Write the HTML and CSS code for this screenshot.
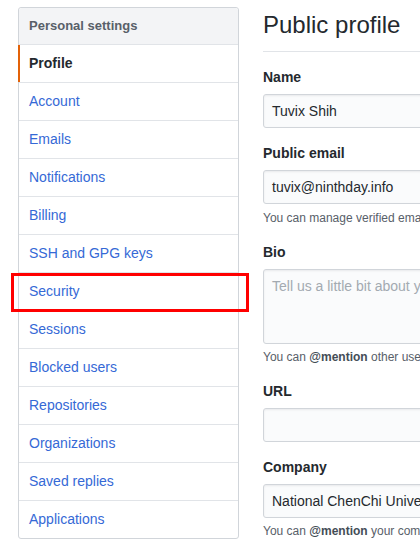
FILE: index.html
```html
<!DOCTYPE html>
<html>
<head>
<meta charset="utf-8">
<link rel="stylesheet" href="styles.css">
</head>
<body>
<div class="page">
  <nav class="menu">
    <div class="menu-heading">Personal settings</div>
    <a class="menu-item selected">Profile</a>
    <a class="menu-item">Account</a>
    <a class="menu-item">Emails</a>
    <a class="menu-item">Notifications</a>
    <a class="menu-item">Billing</a>
    <a class="menu-item">SSH and GPG keys</a>
    <a class="menu-item">Security</a>
    <a class="menu-item">Sessions</a>
    <a class="menu-item">Blocked users</a>
    <a class="menu-item">Repositories</a>
    <a class="menu-item">Organizations</a>
    <a class="menu-item">Saved replies</a>
    <a class="menu-item">Applications</a>
  </nav>
  <main class="main">
    <h2 class="subhead">Public profile</h2>
    <div class="group">
      <label class="label">Name</label>
      <div class="input">Tuvix Shih</div>
    </div>
    <div class="group">
      <label class="label">Public email</label>
      <div class="input">tuvix@ninthday.info</div>
      <p class="note note-spaced">You can manage verified email addresses in your email settings.</p>
    </div>
    <div class="group">
      <label class="label">Bio</label>
      <div class="input textarea placeholder">Tell us a little bit about yourself</div>
      <p class="note">You can <b>@mention</b> other users and organizations to link to them.</p>
    </div>
    <div class="group">
      <label class="label">URL</label>
      <div class="input"></div>
    </div>
    <div class="group">
      <label class="label">Company</label>
      <div class="input">National ChenChi University</div>
      <p class="note">You can <b>@mention</b> your company's GitHub organization to link it.</p>
    </div>
  </main>
</div>
<div class="highlight"></div>
</body>
</html>
```

FILE: styles.css
```css
html, body {
  margin: 0;
  padding: 0;
  overflow: hidden;
  background: #fff;
}
body {
  font-family: "Liberation Sans", Arial, sans-serif;
  font-size: 14px;
  color: #24292e;
  width: 420px;
  height: 548px;
  position: relative;
}
.page {
  display: flex;
  align-items: flex-start;
  gap: 24px;
  padding: 7px 0 0 18px;
  width: 700px;
}
.menu {
  width: 221px;
  flex: none;
  box-sizing: border-box;
  border: 1px solid #d1d5da;
  border-radius: 3px;
  display: flex;
  flex-direction: column;
}
.menu-heading {
  background: #f3f4f6;
  color: #586069;
  font-weight: bold;
  font-size: 13px;
  line-height: 20px;
  padding: 8px 10px;
  border-bottom: 1px solid #e1e4e8;
  border-radius: 3px 3px 0 0;
}
.menu-item {
  display: block;
  color: #3569d6;
  line-height: 21px;
  padding: 8px 10px;
  border-bottom: 1px solid #e1e4e8;
  position: relative;
}
.menu-item:last-child {
  border-bottom: none;
}
.menu-item.selected {
  color: #24292e;
  font-weight: bold;
}
.menu-item.selected::before {
  content: "";
  position: absolute;
  left: -1px;
  top: 0;
  bottom: 0;
  width: 2px;
  background: #e36209;
}
.main {
  width: 440px;
  flex: none;
}
.subhead {
  margin: 5px 0 15px;
  font-size: 24px;
  font-weight: normal;
  line-height: 26px;
  padding-bottom: 13px;
  border-bottom: 1px solid #e1e4e8;
}
.group {
  margin-bottom: 15px;
}
.label {
  display: block;
  font-weight: bold;
  line-height: 20px;
  margin-bottom: 7px;
}
.input {
  box-sizing: border-box;
  height: 34px;
  padding: 6px 8px;
  line-height: 20px;
  font-size: 14px;
  background: #fafbfc;
  border: 1px solid #d1d5da;
  border-radius: 3px;
  box-shadow: inset 0 1px 2px rgba(27, 31, 35, 0.075);
  color: #24292e;
  white-space: nowrap;
  overflow: hidden;
}
.textarea {
  height: 75px;
}
.placeholder {
  color: #a3aab1;
}
.note {
  margin: 4px 0 1px;
  font-size: 12px;
  line-height: 18px;
  color: #586069;
  white-space: nowrap;
}
.note-spaced {
  margin: 5px 0 3px;
}
.note b {
  color: #444d56;
}
.highlight {
  position: absolute;
  left: 11px;
  top: 273px;
  width: 232px;
  height: 33px;
  border: 3px solid #ff0000;
}
```
